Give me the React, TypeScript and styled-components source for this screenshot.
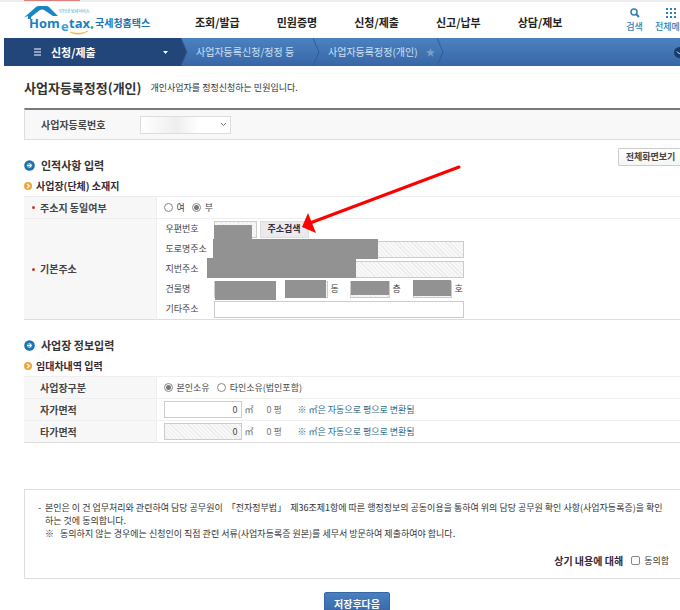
import React from 'react';
import styled, { createGlobalStyle, css } from 'styled-components';

const GlobalStyle = createGlobalStyle`
  *, *::before, *::after { box-sizing: border-box; }
  body { margin: 0; background: #fff; color: #444; font: 9px/12px "Noto Sans CJK KR", sans-serif; }
  button, input, select { font: inherit; color: inherit; margin: 0; }
  a { color: inherit; text-decoration: none; }
  h1, h2, h3, p { margin: 0; }
`;

const hatch = css`
  background: repeating-linear-gradient(45deg, #f8f8f8 0 2px, #ececec 2px 3px);
`;

const Page = styled.div`
  overflow: hidden;
  min-height: 100vh;
`;

const TopStrip = styled.div`
  height: 2px;
  background: #eee;
  padding-left: 24px;
`;

const TopMark = styled.div`
  width: 56px;
  height: 1px;
  background: #dc7f7f;
`;

const Header = styled.header`
  display: flex;
  align-items: center;
  height: 36px;
  padding-left: 24px;
`;

const LogoLink = styled.a`
  display: block;
  flex: none;
  width: 171px;
  height: 36px;
`;

const MainNav = styled.nav`
  display: flex;
  flex: 1;
  gap: 37px;
  padding-top: 3px;
  color: #222;
  font-size: 11px;
  font-weight: 700;
  line-height: 16px;
  white-space: nowrap;
`;

const Tools = styled.div`
  display: flex;
  flex: none;
  gap: 12px;
  margin-right: -8px;
`;

const ToolButton = styled.button`
  display: flex;
  flex-direction: column;
  align-items: center;
  gap: 3px;
  padding: 0;
  border: 0;
  background: none;
  color: #2f7fb8;
  font-weight: 500;
  white-space: nowrap;
`;

const PathBar = styled.nav`
  display: flex;
  height: 28px;
  margin-left: 4px;
  background: linear-gradient(#4a82bf, #3866a6);
  color: #cfe0f2;
  font-size: 10px;
  line-height: 26px;
  white-space: nowrap;
`;

const PathMenu = styled.button`
  display: flex;
  align-items: center;
  gap: 10px;
  width: 177px;
  padding: 0 13px 0 30px;
  border: 0;
  background: #22467a;
  color: #fff;
  font-size: 11px;
  font-weight: 700;
  line-height: 26px;
`;

const MenuCaret = styled.svg`
  margin-left: auto;
`;

const PathEdge = styled.svg`
  flex: none;
`;

const PathLink = styled.a`
  padding-left: 8px;
`;

const PathStep = styled.div`
  display: flex;
  align-items: center;
  gap: 8px;
  width: ${(p: { $width: number }) => p.$width}px;
`;

const PathToggle = styled.button`
  display: flex;
  align-items: center;
  margin-left: auto;
  margin-right: -5px;
  padding: 0;
  border: 0;
  background: none;
`;

const Content = styled.main`
  margin: 0 -10px 0 24px;
`;

const TitleRow = styled.div`
  display: flex;
  align-items: center;
  gap: 9px;
  height: 42px;
  padding-top: 2px;
  color: #333;
`;

const Title = styled.h1`
  font-size: 13px;
  font-weight: 700;
  line-height: 20px;
  color: #333;
`;

const Lookup = styled.section`
  display: flex;
  align-items: center;
  height: 32px;
  padding-left: 16px;
  border-top: 2px solid #7a7a7a;
  border-bottom: 1px solid #ddd;
  border-left: 1px solid #ddd;
  background: #f8f8f8;
`;

const LookupLabel = styled.label`
  width: 99px;
  font-size: 10px;
  font-weight: 700;
`;

const SelectBox = styled.span`
  display: flex;
  position: relative;
`;

const NumberSelect = styled.select`
  width: 91px;
  height: 18px;
  border: 1px solid #ddd;
  border-radius: 0;
  background: linear-gradient(90deg, #fff, #eee 40%, #fff 65%);
  appearance: none;
`;

const SelectArrow = styled.svg`
  position: absolute;
  right: 4px;
  top: 6px;
  pointer-events: none;
`;

const ViewRow = styled.div`
  display: flex;
  justify-content: flex-end;
  height: 15px;
  padding: 8px 3px 0 0;
`;

const ViewButton = styled.button`
  height: 18px;
  width: 69px;
  padding: 0 4px 0 0;
  border: 1px solid #ccc;
  border-radius: 1px;
  background: linear-gradient(#fff, #f5f5f5);
  color: #444;
  font-weight: 700;
  white-space: nowrap;
`;

const SectionTitle = styled.h2`
  display: flex;
  align-items: center;
  gap: 6px;
  height: 20px;
  font-size: 11px;
  font-weight: 700;
  color: #333;
`;

const SubTitle = styled.h3`
  display: flex;
  align-items: center;
  gap: 4px;
  height: 21px;
  font-size: 10px;
  font-weight: 700;
  color: #35263a;
`;

const FormTable = styled.table`
  width: 100%;
  table-layout: fixed;
  border-collapse: collapse;
  border-top: 1px solid #ddd;
  border-bottom: 1px solid #ddd;
`;

const HeadCell = styled.th`
  width: 132px;
  padding: 0 0 0 16px;
  border-top: 1px solid #eee;
  border-right: 1px solid #eee;
  background: #f7f7f7;
  font-size: 10px;
  font-weight: 700;
  text-align: left;
`;

const RequiredLabel = styled.span`
  display: flex;
  align-items: center;
  gap: 5px;
  margin-left: -8px;

  &::before {
    content: "";
    width: 3px;
    height: 3px;
    border-radius: 50%;
    background: #c33;
  }
`;

const Cell = styled.td`
  height: ${(p: { $height?: number }) => p.$height ?? 22}px;
  padding: 0 0 0 7px;
  border-top: 1px solid #eee;
`;

const Line = styled.div`
  display: flex;
  align-items: center;
`;

const Choice = styled.label`
  display: flex;
  align-items: center;
  gap: 4px;
  margin-right: 7px;
`;

const Radio = styled.input.attrs({ type: 'radio' })`
  width: 9px;
  height: 9px;
  border: 1px solid #888;
  border-radius: 50%;
  background: #fff;
  appearance: none;

  &:checked {
    background: radial-gradient(circle, #777 0 2px, #fff 3px);
  }
`;

const AddressLine = styled.div`
  display: flex;
  align-items: center;
  height: 20px;
  padding-left: 2px;
`;

const AddressLabel = styled.label`
  flex: none;
  width: 48px;
  white-space: nowrap;
`;

const Field = styled.span`
  display: flex;
  position: relative;
  width: ${(p: { $width: number }) => p.$width}px;
`;

const TextInput = styled.input<{ $right?: boolean }>`
  width: 100%;
  height: 17px;
  padding: 0 3px;
  border: 1px solid #ccc;
  border-radius: 0;
  background: #fff;
  text-align: ${(p) => (p.$right ? 'right' : 'left')};

  &:read-only {
    ${hatch}
  }
`;

const Mask = styled.span<{ $left: number; $top: number; $width: number; $height: number }>`
  position: absolute;
  left: ${(p) => p.$left}px;
  top: ${(p) => p.$top}px;
  width: ${(p) => p.$width}px;
  height: ${(p) => p.$height}px;
  background: #929292;
`;

const Unit = styled.span`
  width: ${(p: { $width: number }) => p.$width}px;
  padding-left: 3px;
`;

const SearchWrap = styled.span`
  position: relative;
  display: flex;
  margin-left: 3px;
`;

const SearchButton = styled.button`
  width: 49px;
  height: 17px;
  padding: 0;
  border: 1px solid #ddd;
  background: #ebebee;
  color: #332a3c;
  font-weight: 700;
  white-space: nowrap;
`;

const Arrow = styled.svg`
  position: absolute;
  left: 40px;
  top: -57px;
  z-index: 1;
  pointer-events: none;
`;

const AreaUnit = styled.span`
  width: 25px;
  padding-left: 3px;
  color: #666;
`;

const Pyeong = styled.span`
  width: 31px;
  color: #777;
`;

const Hint = styled.span`
  color: #2c6a87;
`;

const Terms = styled.section`
  min-height: 90px;
  margin-top: 46px;
  padding: 11px 20px 0 20px;
  border: 1px solid #ddd;
  color: #333;
  line-height: 13px;
`;

const TermsText = styled.p`
  position: relative;
  word-break: keep-all;
`;

const Dash = styled.span`
  position: absolute;
  left: -7px;
`;

const Agreement = styled.div`
  display: flex;
  justify-content: flex-end;
  align-items: center;
  gap: 8px;
  margin-top: 14px;
`;

const AgreeLabel = styled.label`
  display: flex;
  align-items: center;
  gap: 4px;
`;

const CheckBox = styled.input.attrs({ type: 'checkbox' })`
  width: 9px;
  height: 9px;
  border: 1px solid #888;
  border-radius: 2px;
  background: #fff;
  appearance: none;
`;

const Strong = styled.strong`
  font-size: 10px;
  font-weight: 700;
  color: #35263a;
`;

const Actions = styled.div`
  display: flex;
  justify-content: center;
  margin-top: 13px;
`;

const SaveButton = styled.button`
  width: 66px;
  height: 23px;
  padding: 0;
  border: 1px solid #3567a6;
  border-radius: 2px;
  background: linear-gradient(#4980bd, #3866a6);
  color: #fff;
  font-size: 10px;
  font-weight: 700;
`;

const Logo = () => (
  <svg width="126" height="36" viewBox="24 2 126 36" role="img" aria-label="Hometax 국세청홈택스">
    <path d="M24 17.500L36 7Q37 6 39 6H46Q48 6 49 7L58 16H53L44 10Q42 9 40 10L31 17V19H28V16Z" fill="#1c86c4" />
    <text x="59" y="13" fontFamily="Noto Sans CJK KR" fontSize="4" fill="#3a9bd0">인터넷 납세서비스</text>
    <g fontFamily="Open Sans" fontWeight="700" fill="#1b7fc0" fontSize="13">
      <text x="29" y="28">Hom</text>
      <text x="61" y="31" fill="#3aa0d8">e</text>
      <text x="69" y="28">tax</text>
    </g>
    <circle cx="92" cy="27.500" r="1.400" fill="#3cae6b" />
    <path d="M70 32Q79 37 88 31Q80 35 70 32Z" fill="#f0b13c" stroke="#f0b13c" strokeWidth="0.600" />
    <text x="95" y="27" fontFamily="Noto Sans CJK KR" fontSize="10" fontWeight="700" fill="#1b74b4">국세청홈택스</text>
  </svg>
);

const Step = ({ solid }: { solid?: boolean }) => (
  <PathEdge width="7" height="28" viewBox="0 0 7 28">
    {solid && <path d="M0 0L6 14L0 28Z" fill="#22467a" />}
    <path d="M0 0L6 14L0 28" fill="none" stroke="#2f5c99" />
  </PathEdge>
);

const BlueBullet = () => (
  <svg width="11" height="11" viewBox="0 0 11 11">
    <circle cx="5.500" cy="5.500" r="5.300" fill="#1d70aa" />
    <circle cx="5.500" cy="5.500" r="2.800" fill="#5aa9d6" />
    <path d="M3 5.500H7M5.500 3.500L7.500 5.500L5.500 7.500" fill="none" stroke="#fff" strokeWidth="0.900" />
  </svg>
);

const OrangeBullet = () => (
  <svg width="8" height="8" viewBox="0 0 8 8">
    <circle cx="4" cy="4" r="4" fill="#eda638" />
    <path d="M3 2L5.500 4L3 6" fill="none" stroke="#fff" strokeWidth="1.200" />
  </svg>
);

const AreaRow = ({ id, label, readOnly }: { id: string; label: string; readOnly?: boolean }) => (
  <tr>
    <HeadCell scope="row"><label htmlFor={id}>{label}</label></HeadCell>
    <Cell>
      <Line>
        <Field $width={78}><TextInput id={id} $right defaultValue="0" readOnly={readOnly} /></Field>
        <AreaUnit>㎡</AreaUnit>
        <Pyeong>0 평</Pyeong>
        <Hint>※ ㎡은 자동으로 평으로 변환됨</Hint>
      </Line>
    </Cell>
  </tr>
);

export default function App() {
  return (
    <Page>
      <GlobalStyle />
      <TopStrip><TopMark /></TopStrip>
      <Header>
        <LogoLink href="#"><Logo /></LogoLink>
        <MainNav>
          <a href="#">조회/발급</a>
          <a href="#">민원증명</a>
          <a href="#">신청/제출</a>
          <a href="#">신고/납부</a>
          <a href="#">상담/제보</a>
        </MainNav>
        <Tools>
          <ToolButton>
            <svg width="10" height="10" viewBox="0 0 10 10" fill="none" stroke="#2f7fb8">
              <circle cx="4" cy="4" r="3" strokeWidth="1.500" />
              <path d="M6 6L9 9" strokeWidth="2" />
            </svg>
            검색
          </ToolButton>
          <ToolButton>
            <svg width="10" height="10" viewBox="0 0 10 10" fill="#2f7fb8">
              {[0, 4, 8].flatMap((y) => [0, 4, 8].map((x) => <rect key={`${x}-${y}`} x={x} y={y} width="2" height="2" />))}
            </svg>
            전체메뉴
          </ToolButton>
        </Tools>
      </Header>
      <PathBar>
        <PathMenu>
          <svg width="7" height="8" viewBox="0 0 7 8" stroke="#fff"><path d="M0 1H7M0 4H7M0 7H7" /></svg>
          신청/제출
          <MenuCaret width="5" height="3" viewBox="0 0 5 3"><path d="M0 0H5L2.500 3Z" fill="#fff" /></MenuCaret>
        </PathMenu>
        <Step solid />
        <PathStep $width={125}><PathLink href="#">사업자등록신청/정정 등</PathLink></PathStep>
        <Step />
        <PathStep $width={117}>
          <PathLink href="#">사업자등록정정(개인)</PathLink>
          <svg width="9" height="9" viewBox="0 0 10 10"><path d="M5 0L6.300 3.500L10 3.700L7.100 6L8 9.700L5 7.600L2 9.700L2.900 6L0 3.700L3.700 3.500Z" fill="#7d9dc6" /></svg>
        </PathStep>
        <Step />
        <PathToggle aria-label="펼치기">
          <svg width="11" height="11" viewBox="0 0 11 11">
            <circle cx="5.500" cy="5.500" r="5.500" fill="#1c3c68" />
            <path d="M3 4.500L5.500 7L8 4.500" fill="none" stroke="#dce8f5" />
          </svg>
        </PathToggle>
      </PathBar>
      <Content>
        <TitleRow>
          <Title>사업자등록정정(개인)</Title>
          <p>개인사업자를 정정신청하는 민원입니다.</p>
        </TitleRow>
        <Lookup>
          <LookupLabel htmlFor="bizno">사업자등록번호</LookupLabel>
          <SelectBox>
            <NumberSelect id="bizno" />
            <SelectArrow width="7" height="5" viewBox="0 0 7 5"><path d="M1 1L3.500 3.500L6 1" fill="none" stroke="#777" /></SelectArrow>
          </SelectBox>
        </Lookup>
        <ViewRow><ViewButton>전체화면보기</ViewButton></ViewRow>
        <SectionTitle><BlueBullet />인적사항 입력</SectionTitle>
        <SubTitle><OrangeBullet />사업장(단체) 소재지</SubTitle>
        <FormTable>
          <tbody>
            <tr>
              <HeadCell scope="row"><RequiredLabel>주소지 동일여부</RequiredLabel></HeadCell>
              <Cell>
                <Line>
                  <Choice><Radio name="same" />여</Choice>
                  <Choice><Radio name="same" defaultChecked />부</Choice>
                </Line>
              </Cell>
            </tr>
            <tr>
              <HeadCell scope="row"><RequiredLabel>기본주소</RequiredLabel></HeadCell>
              <Cell $height={101}>
                <AddressLine>
                  <AddressLabel htmlFor="zip">우편번호</AddressLabel>
                  <Field $width={43}><TextInput id="zip" readOnly /><Mask $left={0} $top={4} $width={38} $height={14} /></Field>
                  <SearchWrap>
                    <SearchButton>주소검색</SearchButton>
                    <Arrow width="162" height="72" viewBox="300 164 162 72">
                      <path d="M459 167L310 223" stroke="#f00" strokeWidth="3" strokeLinecap="round" />
                      <path d="M302 227L308 213L316 233Z" fill="#f00" />
                    </Arrow>
                  </SearchWrap>
                </AddressLine>
                <AddressLine>
                  <AddressLabel htmlFor="road">도로명주소</AddressLabel>
                  <Field $width={250}><TextInput id="road" readOnly /><Mask $left={-1} $top={-2} $width={165} $height={20} /></Field>
                </AddressLine>
                <AddressLine>
                  <AddressLabel htmlFor="lot">지번주소</AddressLabel>
                  <Field $width={250}><TextInput id="lot" readOnly /><Mask $left={-7} $top={-3} $width={149} $height={20} /></Field>
                </AddressLine>
                <AddressLine>
                  <AddressLabel htmlFor="building">건물명</AddressLabel>
                  <Field $width={57}><TextInput id="building" readOnly /><Mask $left={1} $top={0} $width={61} $height={19} /></Field>
                  <Unit $width={16} />
                  <Field $width={41}><TextInput aria-label="동" readOnly /><Mask $left={-2} $top={-1} $width={41} $height={18} /></Field>
                  <Unit $width={22}>동</Unit>
                  <Field $width={40}><TextInput aria-label="층" readOnly /><Mask $left={1} $top={0} $width={38} $height={14} /></Field>
                  <Unit $width={23}>층</Unit>
                  <Field $width={39}><TextInput aria-label="호" readOnly /><Mask $left={0} $top={-1} $width={38} $height={16} /></Field>
                  <Unit $width={12}>호</Unit>
                </AddressLine>
                <AddressLine>
                  <AddressLabel htmlFor="etc">기타주소</AddressLabel>
                  <Field $width={250}><TextInput id="etc" /></Field>
                </AddressLine>
              </Cell>
            </tr>
          </tbody>
        </FormTable>
        <ViewRow />
        <SectionTitle><BlueBullet />사업장 정보입력</SectionTitle>
        <SubTitle><OrangeBullet />임대차내역 입력</SubTitle>
        <FormTable>
          <tbody>
            <tr>
              <HeadCell scope="row">사업장구분</HeadCell>
              <Cell>
                <Line>
                  <Choice><Radio name="owner" defaultChecked />본인소유</Choice>
                  <Choice><Radio name="owner" />타인소유(법인포함)</Choice>
                </Line>
              </Cell>
            </tr>
            <AreaRow id="own" label="자가면적" />
            <AreaRow id="rent" label="타가면적" readOnly />
          </tbody>
        </FormTable>
        <Terms>
          <TermsText>
            <Dash>-</Dash>
            본인은 이 건 업무처리와 관련하여 담당 공무원이 &nbsp;「전자정부법」 &nbsp;제36조제1항에 따른 행정정보의 공동이용을 통하여 위의 담당 공무원 확인 사항(사업자등록증)을 확인<br />
            하는 것에 동의합니다.
          </TermsText>
          <TermsText>※ &nbsp; 동의하지 않는 경우에는 신청인이 직접 관련 서류(사업자등록증 원본)를 세무서 방문하여 제출하여야 합니다.</TermsText>
          <Agreement>
            <Strong>상기 내용에 대해</Strong>
            <AgreeLabel><CheckBox />동의함</AgreeLabel>
          </Agreement>
        </Terms>
        <Actions><SaveButton>저장후다음</SaveButton></Actions>
      </Content>
    </Page>
  );
}
